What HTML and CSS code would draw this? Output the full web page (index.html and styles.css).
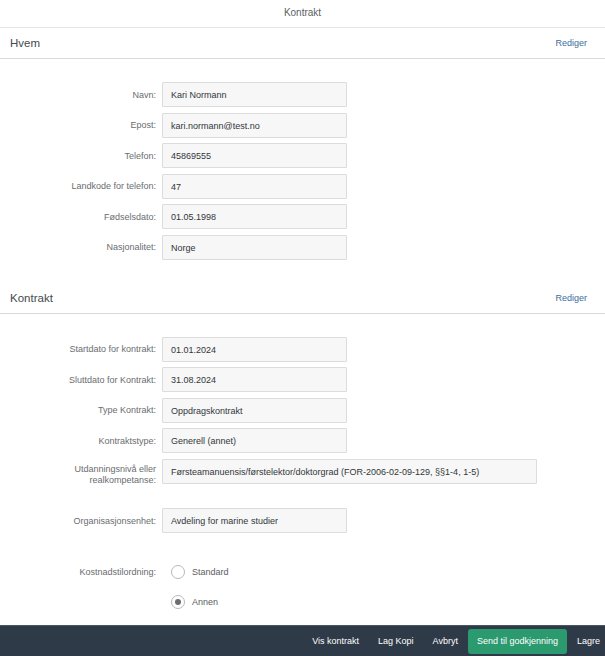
FILE: index.html
```html
<!DOCTYPE html>
<html lang="no">

<head>
    <meta charset="UTF-8">
    <meta name="viewport" content="width=device-width, initial-scale=1.0">
    <title>Kontrakt</title>
    <link rel="stylesheet" href="styles.css">
</head>

<body>
    <div class="page">
        <div class="topbar">Kontrakt</div>

        <div class="content">
            <div class="section-head">
                <h2>Hvem</h2>
                <a href="#" class="edit-link">Rediger</a>
            </div>
            <div class="form">
                <div class="row">
                    <label>Navn:</label>
                    <div class="field">Kari Normann</div>
                </div>
                <div class="row">
                    <label>Epost:</label>
                    <div class="field">kari.normann@test.no</div>
                </div>
                <div class="row">
                    <label>Telefon:</label>
                    <div class="field">45869555</div>
                </div>
                <div class="row">
                    <label>Landkode for telefon:</label>
                    <div class="field">47</div>
                </div>
                <div class="row">
                    <label>Fødselsdato:</label>
                    <div class="field">01.05.1998</div>
                </div>
                <div class="row">
                    <label>Nasjonalitet:</label>
                    <div class="field">Norge</div>
                </div>
            </div>

            <div class="section-head">
                <h2>Kontrakt</h2>
                <a href="#" class="edit-link">Rediger</a>
            </div>
            <div class="form">
                <div class="row">
                    <label>Startdato for kontrakt:</label>
                    <div class="field">01.01.2024</div>
                </div>
                <div class="row">
                    <label>Sluttdato for Kontrakt:</label>
                    <div class="field">31.08.2024</div>
                </div>
                <div class="row">
                    <label>Type Kontrakt:</label>
                    <div class="field">Oppdragskontrakt</div>
                </div>
                <div class="row">
                    <label>Kontraktstype:</label>
                    <div class="field">Generell (annet)</div>
                </div>
                <div class="row row-top">
                    <label>Utdanningsnivå eller<br>realkompetanse:</label>
                    <div class="field field-wide">Førsteamanuensis/førstelektor/doktorgrad (FOR-2006-02-09-129, §§1-4, 1-5)</div>
                </div>
                <div class="row row-spaced">
                    <label>Organisasjonsenhet:</label>
                    <div class="field">Avdeling for marine studier</div>
                </div>
                <div class="row row-radio">
                    <label>Kostnadstilordning:</label>
                    <div class="radio-group">
                        <div class="radio"><span class="radio-dot"></span>Standard</div>
                        <div class="radio"><span class="radio-dot checked"></span>Annen</div>
                    </div>
                </div>
            </div>
        </div>

        <div class="footer">
            <button type="button">Vis kontrakt</button>
            <button type="button">Lag Kopi</button>
            <button type="button">Avbryt</button>
            <button type="button" class="btn-primary">Send til godkjenning</button>
            <button type="button" class="btn-last">Lagre</button>
        </div>
    </div>
</body>

</html>
```

FILE: styles.css
```css
body {
    font-family: "Liberation Sans", Arial, sans-serif;
    margin: 0;
    background-color: #fff;
    color: #32363a;
}

.page {
    display: flex;
    flex-direction: column;
    height: 100vh;
    overflow: hidden;
}

.topbar {
    height: 27px;
    line-height: 26px;
    text-align: center;
    font-size: 10px;
    color: #5c5f62;
    border-bottom: 1px solid #e3e6e9;
    flex-shrink: 0;
}

.content {
    flex: 1;
    overflow: hidden;
}

.section-head {
    display: flex;
    justify-content: space-between;
    align-items: center;
    height: 30px;
    padding: 0 18px 0 10px;
    border-bottom: 1px solid #d9d9d9;
}

h2 {
    margin: 0;
    font-size: 11.5px;
    font-weight: normal;
    color: #46494c;
}

.edit-link {
    font-size: 9px;
    color: #3d6d9e;
    text-decoration: none;
}

.form {
    padding: 23px 0 23px 0;
}

.row {
    display: flex;
    align-items: center;
    gap: 6px;
    margin-bottom: 5.5px;
}

.row:last-child {
    margin-bottom: 0;
}

label {
    width: 156px;
    flex-shrink: 0;
    text-align: right;
    font-size: 9px;
    color: #6a6d70;
}

.field {
    width: 185px;
    height: 25px;
    line-height: 24px;
    box-sizing: border-box;
    padding: 0 8px;
    background-color: #f7f7f7;
    border: 1px solid #dcdcdc;
    border-radius: 1px;
    font-size: 9px;
    color: #32363a;
    white-space: nowrap;
}

.field-wide {
    width: 375px;
}

.row-top {
    align-items: flex-start;
}

.row-top label {
    padding-top: 5px;
    line-height: 11px;
}

.row-spaced {
    margin-top: 22.5px;
}

.row-radio {
    align-items: flex-start;
    margin-top: 28.5px;
}

.row-radio label {
    line-height: 14px;
    padding-top: 3px;
}

.radio-group {
    display: flex;
    flex-direction: column;
    gap: 10px;
    padding-left: 9px;
}

.radio {
    display: flex;
    align-items: center;
    gap: 7px;
    height: 20px;
    font-size: 9px;
    color: #5a5d60;
}

.radio-dot {
    width: 14px;
    height: 14px;
    box-sizing: border-box;
    border: 1px solid #b8b8b8;
    border-radius: 50%;
    background-color: #fff;
    display: flex;
    align-items: center;
    justify-content: center;
}

.radio-dot.checked::after {
    content: "";
    width: 6px;
    height: 6px;
    border-radius: 50%;
    background-color: #6a6d70;
}

.footer {
    height: 31px;
    flex-shrink: 0;
    display: flex;
    justify-content: flex-end;
    align-items: center;
    gap: 1px;
    background-color: #2e3a47;
    border-top: 1px solid #4a5562;
    box-sizing: border-box;
}

button {
    height: 25px;
    padding: 0 9px;
    background: none;
    color: #fff;
    border: none;
    border-radius: 3px;
    font-family: "Liberation Sans", Arial, sans-serif;
    font-size: 9px;
    cursor: pointer;
}

.btn-primary {
    background-color: #2b9a6f;
}

.btn-last {
    padding-right: 5px;
}
```
